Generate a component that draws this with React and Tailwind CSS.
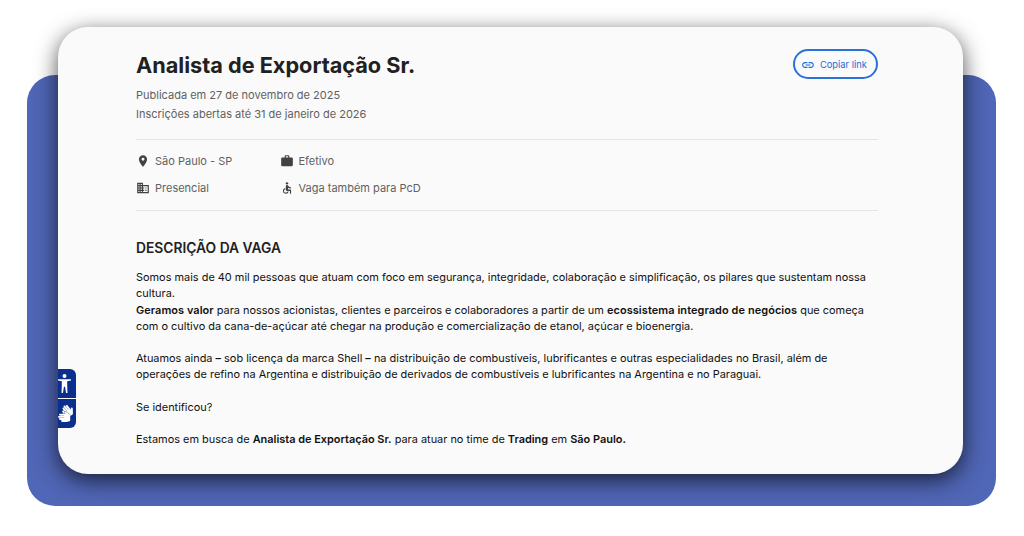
import { MdAccessible, MdDomain, MdLink, MdLocationOn, MdWork } from "react-icons/md";
import { FaSignLanguage } from "react-icons/fa";

function Info({ icon: Icon, children }) {
    return (
        <div className="flex items-center gap-[5px]">
            <Icon size={14} className="text-[#424242] shrink-0" />
            <span>{children}</span>
        </div>
    );
}

// arms-out figure from the accessibility widget
function PersonIcon() {
    return (
        <svg width="13" height="19" viewBox="0 0 13 19" fill="currentColor" className="-ml-[5px]">
            <circle cx="6.5" cy="2" r="2" />
            <path d="M0 5.2h13v1.3l-3.8.8V12l.3 7H8l-.9-6.2h-1.2L5 19H3.5l.3-7V7.3L0 6.5z" />
        </svg>
    );
}

export default function App() {
    return (
        <div className="w-[1024px] h-[536px] overflow-hidden bg-white pt-[75px] px-[28px] font-['Inter',sans-serif]">
            <div className="h-[431px] w-[969px] -ml-px rounded-[28px] bg-[#5066b6] px-[31px]">
                <div className="relative -top-[48px] h-[447px] w-[905px] rounded-[30px] bg-[#fafafa] pl-[78px] pr-[85px] pt-[22px] shadow-[0_6px_22px_rgba(0,0,0,0.7)]">
                    <div className="flex items-start justify-between">
                        <h1 className="text-[21.7px] leading-[32px] font-bold text-[#212121]">
                            Analista de Exportação Sr.
                        </h1>
                        <button className="flex h-[30px] w-[85px] items-center gap-[5px] rounded-full border-2 border-[#2a72d8] pl-[6px] pt-px text-[9.3px] text-[#1c6bd6]">
                            <MdLink size={14} />
                            Copiar link
                        </button>
                    </div>

                    <div className="mt-[5px] text-[11px] leading-[19px] text-[#616161]">
                        <p>Publicada em 27 de novembro de 2025</p>
                        <p>Inscrições abertas até 31 de janeiro de 2026</p>
                    </div>

                    <div className="mt-[15px] grid grid-cols-[143.5px_1fr] gap-y-[13px] border-y border-[#e4e4e4] pt-[14px] pb-[15px] text-[11px] leading-[14px] text-[#616161]">
                        <Info icon={MdLocationOn}>São Paulo - SP</Info>
                        <Info icon={MdWork}>Efetivo</Info>
                        <Info icon={MdDomain}>Presencial</Info>
                        <Info icon={MdAccessible}>Vaga também para PcD</Info>
                    </div>

                    <h2 className="mt-[27px] text-[13.8px] leading-[20px] font-semibold text-[#212121]">
                        DESCRIÇÃO DA VAGA
                    </h2>

                    <div className="mt-[11px] text-[10.93px] leading-[16.3px] text-[#111111]">
                        <p>
                            Somos mais de 40 mil pessoas que atuam com foco em segurança, integridade, colaboração e simplificação, os pilares que sustentam nossa cultura.
                        </p>
                        <p>
                            <strong className="font-semibold tracking-[0.07px]">Geramos valor</strong> para nossos acionistas, clientes e parceiros e colaboradores a partir de um <strong className="font-semibold tracking-[0.09px]">ecossistema integrado de negócios</strong> que começa com o cultivo da cana-de-açúcar até chegar na produção e comercialização de etanol, açúcar e bioenergia.
                        </p>
                        <p className="mt-[16px]">
                            Atuamos ainda <strong className="font-semibold">–</strong> sob licença da marca Shell <strong className="font-semibold">–</strong> na distribuição de combustíveis, lubrificantes e outras especialidades no Brasil, além de operações de refino na Argentina e distribuição de derivados de combustíveis e lubrificantes na Argentina e no Paraguai.
                        </p>
                        <p className="mt-[16px]">Se identificou?</p>
                        <p className="mt-[16px]">
                            Estamos em busca de <strong className="font-semibold">Analista de Exportação Sr.</strong> para atuar no time de <strong className="font-semibold">Trading</strong> em <strong className="font-semibold">São Paulo.</strong>
                        </p>
                    </div>

                    <div className="absolute left-0 top-[342px] flex w-[18px] flex-col gap-px text-white">
                        <div className="flex h-[29px] items-center justify-center overflow-hidden rounded-tr-[6px] bg-[#0a2f8c]">
                            <PersonIcon />
                        </div>
                        <div className="flex h-[29px] items-center justify-center overflow-hidden rounded-br-[6px] bg-[#0a2f8c]">
                            <FaSignLanguage size={17} className="-ml-[4px] shrink-0" />
                        </div>
                    </div>
                </div>
            </div>
        </div>
    );
}
